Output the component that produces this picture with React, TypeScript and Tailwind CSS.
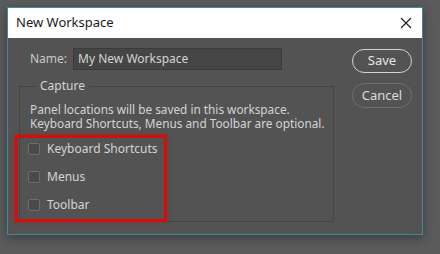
import React from "react";

const options = ["Keyboard Shortcuts", "Menus", "Toolbar"];

const App = () => {
  return (
    <div className="w-[440px] h-[254px] overflow-hidden bg-[#5b5b5b] pt-[7px] pl-[7px] font-['Noto_Sans',sans-serif] text-[12px] text-[#d4d4d4]">
      <div className="w-[416px] h-[228px] border border-[#3f8a9b] bg-[#535353] shadow-[0_3px_10px_rgba(0,0,0,0.35)]">
        <div className="h-[30px] bg-white flex items-center justify-between pl-[8px] pr-[10px]">
          <span className="text-[13px] text-[#1a1a1a]">New Workspace</span>
          <svg width="12" height="12" viewBox="0 0 12 12" className="text-[#222]">
            <path d="M1 1L11 11M11 1L1 11" stroke="currentColor" strokeWidth="1.2" />
          </svg>
        </div>

        <div className="flex">
          <div className="w-[336px] pt-[10px]">
            <div className="flex items-center pl-[22px] gap-[6px]">
              <span className="text-[#c9c9c9] leading-[22px]">Name:</span>
              <div className="w-[209px] h-[22px] bg-[#454545] border border-[#3b3b3b] flex items-center pl-[4px]">
                My New Workspace
              </div>
            </div>

            <fieldset className="ml-[11px] mt-[8px] w-[315px] h-[144px] border border-[#444444] px-0 pb-0">
              <legend className="ml-[16px] px-[4px] leading-[16px]">Capture</legend>
              <p className="pl-[10px] pt-[8px] text-[11.8px] leading-[14px]">
                Panel locations will be saved in this workspace.
                <br />
                Keyboard Shortcuts, Menus and Toolbar are optional.
              </p>
              <div className="-ml-[5px] mt-[5px] w-[152px] h-[87px] border-[3px] border-[#d40d0d] shadow-[0_0_4px_rgba(230,0,0,0.55)] flex flex-col gap-[6px]">
                {options.map((o) => (
                  <label key={o} className="h-[22px] flex items-center gap-[7px] pl-[10px]">
                    <span className="w-[12px] h-[12px] rounded-[2px] border border-[#6c6c6c] bg-[#4a4a4a]" />
                    {o}
                  </label>
                ))}
              </div>
            </fieldset>
          </div>

          <div className="pl-[8px] pt-[11px] flex flex-col gap-[10px]">
            <button className="w-[60px] h-[24px] rounded-full border-[1.5px] border-[#d2d2d2] text-[13px] text-[#e6e6e6]">
              Save
            </button>
            <button className="w-[60px] h-[25px] rounded-full border border-[#6e6e6e] text-[13px] text-[#dcdcdc]">
              Cancel
            </button>
          </div>
        </div>
      </div>
    </div>
  );
};

export default App;
